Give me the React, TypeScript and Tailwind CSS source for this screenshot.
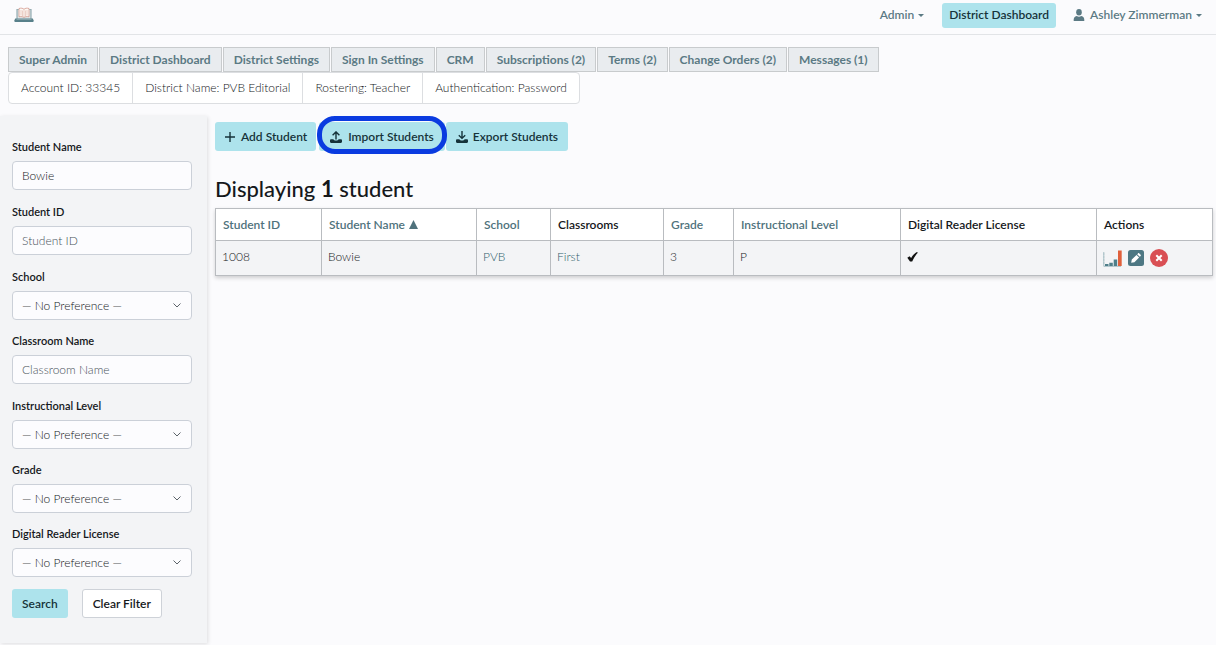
import React from 'react';

const NAV_TABS = [
  'Super Admin',
  'District Dashboard',
  'District Settings',
  'Sign In Settings',
  'CRM',
  'Subscriptions (2)',
  'Terms (2)',
  'Change Orders (2)',
  'Messages (1)',
];

const ACCOUNT_INFO = [
  'Account ID: 33345',
  'District Name: PVB Editorial',
  'Rostering: Teacher',
  'Authentication: Password',
];

type Filter = { id: string; label: string; type: 'text' | 'select'; value?: string };

const FILTERS: Filter[] = [
  { id: 'student-name', label: 'Student Name', type: 'text', value: 'Bowie' },
  { id: 'student-id', label: 'Student ID', type: 'text' },
  { id: 'school', label: 'School', type: 'select' },
  { id: 'classroom-name', label: 'Classroom Name', type: 'text' },
  { id: 'instructional-level', label: 'Instructional Level', type: 'select' },
  { id: 'grade', label: 'Grade', type: 'select' },
  { id: 'reader-license', label: 'Digital Reader License', type: 'select' },
];

const COLUMNS = [
  { label: 'Student ID', sortable: true, width: 'w-[106px]' },
  { label: 'Student Name', sortable: true, sorted: true, width: 'w-[155px]' },
  { label: 'School', sortable: true, width: 'w-[74px]' },
  { label: 'Classrooms', width: 'w-[113px]' },
  { label: 'Grade', sortable: true, width: 'w-[70px]' },
  { label: 'Instructional Level', sortable: true, width: 'w-[167px]' },
  { label: 'Digital Reader License', width: 'w-[196px]' },
  { label: 'Actions', width: 'w-[116px]' },
];

const LogoIcon = () => (
  <svg viewBox="0 0 20 16" className="w-5 h-4">
    <path d="M2.500 2h15v10.500h-15z" fill="#7f9ba2" />
    <path d="M3.500 2.500h13V12h-13z" fill="#dfe5e7" />
    <path d="M5 1.500c2-.7 4-.3 5 .8 1-1.100 3-1.500 5-.8v8.300c-2-.4-4-.2-5 .7-1-.9-3-1.100-5-.7z" fill="#fdf8f4" stroke="#cf8d7e" strokeWidth=".7" />
    <path d="M10 2.500v8M7 3v5.500M8.500 3.500V9M11.500 3.500V9M13 3v5.500" stroke="#d9a79b" strokeWidth=".5" />
    <path d="M1.200 11.500h17.600l1 2.300c0 .7-.4 1.200-1 1.200H1.200c-.6 0-1-.5-1-1.200z" fill="#58808a" />
    <path d="M2.500 12.300h15" stroke="#a7bdc2" strokeWidth=".7" />
  </svg>
);

const UserIcon = () => (
  <svg viewBox="0 0 12 12" className="w-3 h-3" fill="currentColor">
    <ellipse cx="6" cy="3.200" rx="2.800" ry="3.200" />
    <path d="M.7 12c-.3-3 .8-4.600 3.100-5 1.300.9 3.100.9 4.400 0 2.300.4 3.400 2 3.100 5z" />
  </svg>
);

const Caret = () => (
  <svg viewBox="0 0 6 3" className="w-[6px] h-[3px]" fill="currentColor">
    <path d="M0 0h6L3 3z" />
  </svg>
);

const PlusIcon = () => (
  <svg viewBox="0 0 12 12" className="w-3 h-3" stroke="currentColor" strokeWidth="1.400">
    <path d="M6 1v10M1 6h10" />
  </svg>
);

const Tray = () => (
  <path d="M1.200 8.200h2.300c.3 1 1.200 1.400 2.500 1.400s2.200-.4 2.500-1.400h2.300c.7 0 1.200.5 1.200 1.200v1.400c0 .7-.5 1.200-1.200 1.200H1.200C.5 12 0 11.500 0 10.800V9.400c0-.7.5-1.200 1.200-1.200z" fill="currentColor" />
);

const UploadIcon = () => (
  <svg viewBox="0 0 12 12" className="w-3 h-3" fill="none">
    <Tray />
    <path d="M6 8.500V1M2.600 4.200 6 .9l3.400 3.300" stroke="currentColor" strokeWidth="1.400" />
  </svg>
);

const DownloadIcon = () => (
  <svg viewBox="0 0 12 12" className="w-3 h-3" fill="none">
    <Tray />
    <path d="M6 0v7.500M2.800 4.300 6 7.400l3.200-3.100" stroke="currentColor" strokeWidth="1.400" />
  </svg>
);

const ChartIcon = () => (
  <svg viewBox="0 0 19 17" className="w-[19px] h-[17px]">
    <path d="M.8 2v14.300H18" fill="none" stroke="#9db9bf" strokeWidth=".9" />
    <path d="M0 4h1.500M0 7h1.500M0 10h1.500M0 13h1.500" stroke="#9db9bf" strokeWidth=".6" />
    <path d="M2 14h3.500v2H2zM6.300 12.700h3.500V16H6.300zM10.700 9.500h3.500V16h-3.500z" fill="#4f7f8a" />
    <path d="M15 .5h3.700V16H15z" fill="#e0603c" />
  </svg>
);

const EditIcon = () => (
  <svg viewBox="0 0 16 16" className="w-4 h-4">
    <rect width="16" height="16" rx="2.500" fill="#4d7783" />
    <path d="m3.200 12.800.6-3.200 4.700-4.700 2.600 2.600-4.700 4.700zM9.200 4.200l.8-.8c.4-.4.9-.4 1.300 0l1.300 1.300c.4.4.4.900 0 1.300l-.8.8z" fill="#fff" />
  </svg>
);

const DeleteIcon = () => (
  <svg viewBox="0 0 18 18" className="w-[18px] h-[18px]">
    <circle cx="9" cy="9" r="9" fill="#d94f54" />
    <path d="m6.300 6.300 5.400 5.400m0-5.400-5.400 5.400" stroke="#fff" strokeWidth="2" />
  </svg>
);

const TopBar = () => (
  <header className="flex items-center justify-between h-[35px] pl-3.5 pr-3.5 pb-1 border-b border-[#e2e4e7]">
    <a href="#home" aria-label="Home">
      <LogoIcon />
    </a>
    <nav className="flex items-center text-[#5b7a84] font-semibold">
      <button className="flex items-center gap-1 mr-[18px]">
        Admin <Caret />
      </button>
      <a href="#dashboard" className="flex items-center h-[25px] px-[7px] mr-[17px] rounded-[3px] bg-[#ade3ec] text-[#16333a]">
        District Dashboard
      </a>
      <button className="flex items-center gap-1">
        <UserIcon />
        <span className="ml-px">Ashley Zimmerman</span>
        <Caret />
      </button>
    </nav>
  </header>
);

const FilterSidebar = () => (
  <aside className="w-[207px] shrink-0 pt-[22px] pb-[25px] pl-3 pr-[15px] bg-[#f3f4f6] shadow-[1px_1px_4px_rgba(0,0,0,0.12)]">
    <form>
      {FILTERS.map((filter) => (
        <div key={filter.id} className={filter.type === 'text' ? 'mb-[13px]' : 'mb-3'}>
          <label htmlFor={filter.id} className="block mb-[5px] text-[11px] leading-[18px] font-semibold">
            {filter.label}
          </label>
          {filter.type === 'text' ? (
            <input
              id={filter.id}
              type="text"
              defaultValue={filter.value}
              placeholder={filter.label}
              className="block w-full h-[29px] px-[9px] rounded-[4px] border border-[#cbd0d8] bg-[#fcfcfe] text-[#15181b] placeholder:text-[#49525a]"
            />
          ) : (
            <div className="grid items-center">
              <select
                id={filter.id}
                className="col-start-1 row-start-1 appearance-none w-full h-[29px] px-[9px] rounded-[4px] border border-[#cbd0d8] bg-[#fcfcfe] text-[#15181b]"
              >
                <option>— No Preference —</option>
              </select>
              <svg viewBox="0 0 8 5" className="col-start-1 row-start-1 justify-self-end w-2 h-[5px] mr-[11px] pointer-events-none" fill="none" stroke="#5c636a">
                <path d="m.5.5 3.500 3.500L7.500.5" />
              </svg>
            </div>
          )}
        </div>
      ))}
      <div className="flex gap-3.5 font-semibold">
        <button type="submit" className="h-[29px] px-2.5 rounded-[3px] bg-[#ade3ec] text-[#16333a]">
          Search
        </button>
        <button type="reset" className="h-[29px] px-2.5 rounded-[3px] border border-[#ced2d8] bg-white">
          Clear Filter
        </button>
      </div>
    </form>
  </aside>
);

const StudentTable = () => (
  <table className="w-full table-fixed border-collapse text-left shadow-[0_2px_4px_rgba(0,0,0,0.18)]">
    <thead>
      <tr className="h-8 bg-white">
        {COLUMNS.map((col) => (
          <th key={col.label} className={`${col.width} px-[7px] border border-[#b9bcc0] font-semibold`}>
            {col.sortable ? (
              <a href="#sort" className="inline-flex items-center gap-1 text-[#4f727c]">
                {col.label}
                {col.sorted && (
                  <svg viewBox="0 0 9 9" className="w-[9px] h-[9px]" fill="currentColor">
                    <path d="M4.500 0 9 9H0z" />
                  </svg>
                )}
              </a>
            ) : (
              col.label
            )}
          </th>
        ))}
      </tr>
    </thead>
    <tbody>
      <tr className="h-[35px] bg-[#f3f4f6] [&>td]:px-1.5 [&>td]:pb-0.5 [&>td]:border [&>td]:border-[#b9bcc0]">
        <td>1008</td>
        <td>Bowie</td>
        <td><a href="#school" className="text-[#2f5f6d]">PVB</a></td>
        <td><a href="#classroom" className="text-[#2f5f6d]">First</a></td>
        <td>3</td>
        <td>P</td>
        <td>
          <svg viewBox="0 0 11 10" className="w-[11px] h-[10px]" aria-label="Licensed">
            <path d="M.3 5.700 2.600 4.200 4.100 6C5.700 3.300 7.600 1.200 10 0l.8.8C8.500 3.200 6.700 6 5.200 9.600H3z" fill="#111" />
          </svg>
        </td>
        <td>
          <div className="flex items-center gap-1.5 pt-0.5">
            <button aria-label="View reports"><ChartIcon /></button>
            <button aria-label="Edit student"><EditIcon /></button>
            <button aria-label="Remove student"><DeleteIcon /></button>
          </div>
        </td>
      </tr>
    </tbody>
  </table>
);

const App = () => {
  return (
    <div className="min-h-screen bg-[#fbfbfd] font-['Lato',sans-serif] text-[12px] leading-[18px] font-light text-[#15181b]">
      <TopBar />

      {/* District navigation */}
      <div className="pt-3 px-2">
        <nav className="flex gap-px">
          {NAV_TABS.map((tab) => (
            <a key={tab} href="#tab" className="flex items-center h-[25px] px-2.5 border border-[#c8cbcd] bg-[#e9ecef] text-[#5b7a84] font-bold">
              {tab}
            </a>
          ))}
        </nav>
        <ul className="inline-flex rounded-[4px] border border-[#dcdee1] bg-white divide-x divide-[#dcdee1]">
          {ACCOUNT_INFO.map((item) => (
            <li key={item} className="px-3 py-1.5">{item}</li>
          ))}
        </ul>
      </div>

      <div className="flex items-start mt-3">
        <FilterSidebar />

        <main className="flex-1 min-w-0 pt-1.5 pl-2 pr-1">
          {/* Student actions */}
          <div className="flex gap-[3px] font-semibold text-[#16333a]">
            <button className="flex items-center gap-[5px] h-[29px] px-[9px] rounded-[3px] bg-[#ade3ec]">
              <PlusIcon /> Add Student
            </button>
            <button className="relative flex items-center gap-1.5 h-[29px] px-[11px] rounded-[3px] bg-[#ade3ec]">
              <UploadIcon /> Import Students
              <span className="absolute -inset-x-[2px] -top-[6px] -bottom-[3px] z-10 rounded-[18px] border-[5px] border-[#0a3be0]" />
            </button>
            <button className="flex items-center gap-[5px] h-[29px] px-2.5 -ml-0.5 rounded-[3px] bg-[#ade3ec]">
              <DownloadIcon /> Export Students
            </button>
          </div>

          <h1 className="mt-[22px] mb-1 text-[22px] leading-[31px] font-medium">
            Displaying <strong className="font-bold">1</strong> student
          </h1>
          <StudentTable />
        </main>
      </div>
    </div>
  );
};

export default App;
